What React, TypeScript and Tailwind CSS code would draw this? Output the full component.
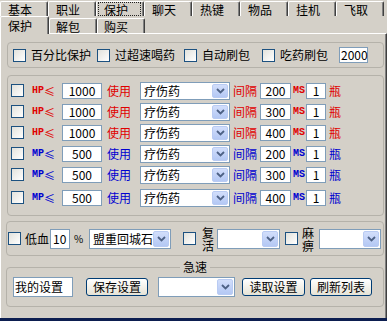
import React from 'react';

const BG = 'bg-[#d4d0c8]';

const topTabs = ['基本', '职业', '保护', '聊天', '热键', '物品', '挂机', '飞取'];

const potionRows = [
  { kind: 'HP', limit: '1000', gap: '200' },
  { kind: 'HP', limit: '1000', gap: '300' },
  { kind: 'HP', limit: '1000', gap: '400' },
  { kind: 'MP', limit: '500', gap: '200' },
  { kind: 'MP', limit: '500', gap: '300' },
  { kind: 'MP', limit: '500', gap: '400' },
];

function Check({ className = '' }: { className?: string }) {
  return (
    <span
      className={`block w-[13px] h-[13px] shrink-0 border border-[#1c5180] bg-gradient-to-br from-[#e2e2dc] to-white ${className}`}
    />
  );
}

function TextBox({ value, className }: { value: string; className: string }) {
  return (
    <span
      className={`flex items-center shrink-0 border border-[#7f9db9] bg-white whitespace-nowrap ${className}`}
    >
      {value}
    </span>
  );
}

function Chevron() {
  return (
    <svg width="9" height="6" viewBox="0 0 9 6">
      <path d="M1 1 L4.5 4.5 L8 1" fill="none" stroke="#4d6185" strokeWidth="1.8" />
    </svg>
  );
}

function Combo({ value = '', className }: { value?: string; className: string }) {
  return (
    <span
      className={`flex items-stretch shrink-0 border border-[#7f9db9] bg-white p-px ${className}`}
    >
      <span className="flex-1 flex items-center pl-[2px] whitespace-nowrap">{value}</span>
      <span className="w-[16px] flex items-center justify-center rounded-[2px] border border-[#b9cbf3] bg-gradient-to-b from-[#d2defb] to-[#b4c8f4]">
        <Chevron />
      </span>
    </span>
  );
}

function Btn({ label, className }: { label: string; className: string }) {
  return (
    <span
      className={`flex items-center justify-center shrink-0 border border-[#003c74] rounded-[3px] bg-gradient-to-b from-white to-[#e6e3d6] ${className}`}
    >
      {label}
    </span>
  );
}

function Stacked({ a, b, className }: { a: string; b: string; className: string }) {
  return (
    <span className={`w-[12px] flex flex-col text-[12px] leading-[13px] ${className}`}>
      <span className="block h-[13px]">{a}</span>
      <span className="block h-[13px]">{b}</span>
    </span>
  );
}

function PotionRow({ kind, limit, gap, last }: { kind: string; limit: string; gap: string; last: boolean }) {
  const color = kind === 'HP' ? 'text-[#e00000]' : 'text-[#0000d0]';
  return (
    <div className={`flex items-center h-[21px] ${last ? 'mt-[2px]' : ''}`}>
      <Check className="ml-[3px]" />
      <span className={`ml-[8px] w-[22px] flex items-center ${color}`}>
        <span className="text-[10px] font-bold font-['Liberation_Mono',monospace]">{kind}</span>
        <span className="text-[11px]">≤</span>
      </span>
      <TextBox value={limit} className="ml-[8px] w-[40px] h-[16px] justify-center" />
      <span className={`ml-[5px] w-[24px] ${color}`}>使用</span>
      <Combo value="疗伤药" className="ml-[9px] w-[90px] h-[18px]" />
      <span className={`ml-[3px] w-[24px] ${color}`}>间隔</span>
      <TextBox value={gap} className="ml-[3px] w-[31px] h-[16px] justify-center" />
      <span className={`ml-[2px] w-[12px] text-[10px] font-bold font-['Liberation_Mono',monospace] ${color}`}>MS</span>
      <TextBox value="1" className="ml-[1px] w-[20px] h-[16px] justify-center" />
      <span className={`ml-[3px] ${color}`}>瓶</span>
    </div>
  );
}

export default function App() {
  return (
    <div
      className={`w-[387px] h-[321px] overflow-hidden flex flex-col ${BG} text-black text-[12px] leading-[14px] font-['Noto_Sans_CJK_SC','Noto_Sans',sans-serif]`}
    >
      {/* outer tabs */}
      <div className="flex h-[16px] pt-[1px]">
        {topTabs.map((t, i) => (
          <div
            key={t + i}
            className="w-[48px] h-full shrink-0 border-l border-t border-r border-l-white border-t-white border-r-[#404040] rounded-t-[2px] shadow-[inset_-1px_0_0_#808080] pl-[1px] pr-[2px]"
          >
            {i === 2 ? (
              <span className="block h-[14px] border border-dotted border-[#222] pl-[5px]">{t}</span>
            ) : (
              <span className="block pl-[6px] pt-px">{t}</span>
            )}
          </div>
        ))}
      </div>

      {/* inner tabs */}
      <div className="flex h-[17px] items-end">
        <div
          className={`relative z-10 -mb-px w-[49px] h-[18px] ${BG} border-l border-t border-r border-l-white border-t-white border-r-[#404040] rounded-t-[2px] shadow-[inset_-1px_0_0_#808080] pl-[7px] pt-[2px]`}
        >
          保护
        </div>
        {['解包', '购买'].map((t) => (
          <div
            key={t}
            className="w-[48px] h-[15px] border-t border-r border-t-white border-r-[#404040] rounded-t-[2px] shadow-[inset_-1px_0_0_#808080,inset_1px_0_0_#fff] pl-[7px] pt-px"
          >
            {t}
          </div>
        ))}
      </div>

      {/* panel */}
      <div className="flex-1 flex flex-col border-t border-l border-r border-t-white border-l-white border-r-[#404040] shadow-[inset_-1px_0_0_#808080] pt-[8px]">
        <div className="ml-[6px] w-[377px] h-[26px] shrink-0 border border-[#b5b2aa] rounded-[4px] flex items-center whitespace-nowrap">
          <Check className="ml-[5px]" />
          <span className="ml-[5px] w-[60px]">百分比保护</span>
          <Check className="ml-[6px]" />
          <span className="ml-[5px] w-[60px]">过超速喝药</span>
          <Check className="ml-[9px]" />
          <span className="ml-[5px] w-[48px]">自动刷包</span>
          <Check className="ml-[12px]" />
          <span className="ml-[5px] w-[48px]">吃药刷包</span>
          <TextBox value="2000" className="ml-[11px] w-[29px] h-[16px] pl-px" />
        </div>

        <div className="ml-[6px] mt-[7px] w-[377px] h-[141px] shrink-0 border border-[#b5b2aa] rounded-[4px] pt-[4px] flex flex-col">
          {potionRows.map((r, i) => (
            <PotionRow key={i} {...r} last={i === potionRows.length - 1} />
          ))}
        </div>

        <div className="ml-[5px] mt-[5px] w-[378px] h-[35px] shrink-0 border border-[#b5b2aa] rounded-[4px] flex items-center whitespace-nowrap">
          <Check className="ml-[1px]" />
          <span className="ml-[4px] w-[24px]">低血</span>
          <TextBox value="10" className="ml-[1px] w-[20px] h-[20px] pl-[2px]" />
          <span className="ml-[4px] w-[8px] text-[10px]">%</span>
          <Combo value="盟重回城石" className="ml-[7px] w-[82px] h-[20px]" />
          <Check className="ml-[12px]" />
          <Stacked a="复" b="活" className="ml-[6px]" />
          <Combo className="ml-[3px] w-[63px] h-[20px]" />
          <Check className="ml-[5px]" />
          <Stacked a="麻" b="痹" className="ml-[4px]" />
          <Combo className="ml-[5px] w-[62px] h-[20px]" />
        </div>

        <fieldset className="ml-[5px] mt-[4px] w-[378px] shrink-0 border border-[#b5b2aa] rounded-[4px] pt-[3px] pb-[9px]">
          <legend className="mx-auto px-[3px] leading-[14px]">急速</legend>
          <div className="flex items-center h-[20px] whitespace-nowrap">
            <TextBox value="我的设置" className="ml-[6px] w-[60px] h-[20px] pl-px" />
            <Btn label="保存设置" className="ml-[13px] w-[62px] h-[18px]" />
            <Combo className="ml-[10px] w-[77px] h-[20px]" />
            <Btn label="读取设置" className="ml-[7px] w-[63px] h-[18px]" />
            <Btn label="刷新列表" className="ml-[5px] w-[62px] h-[18px]" />
          </div>
        </fieldset>
      </div>

      <div className="h-[3px] shrink-0 bg-[#0c1e50]" />
    </div>
  );
}
